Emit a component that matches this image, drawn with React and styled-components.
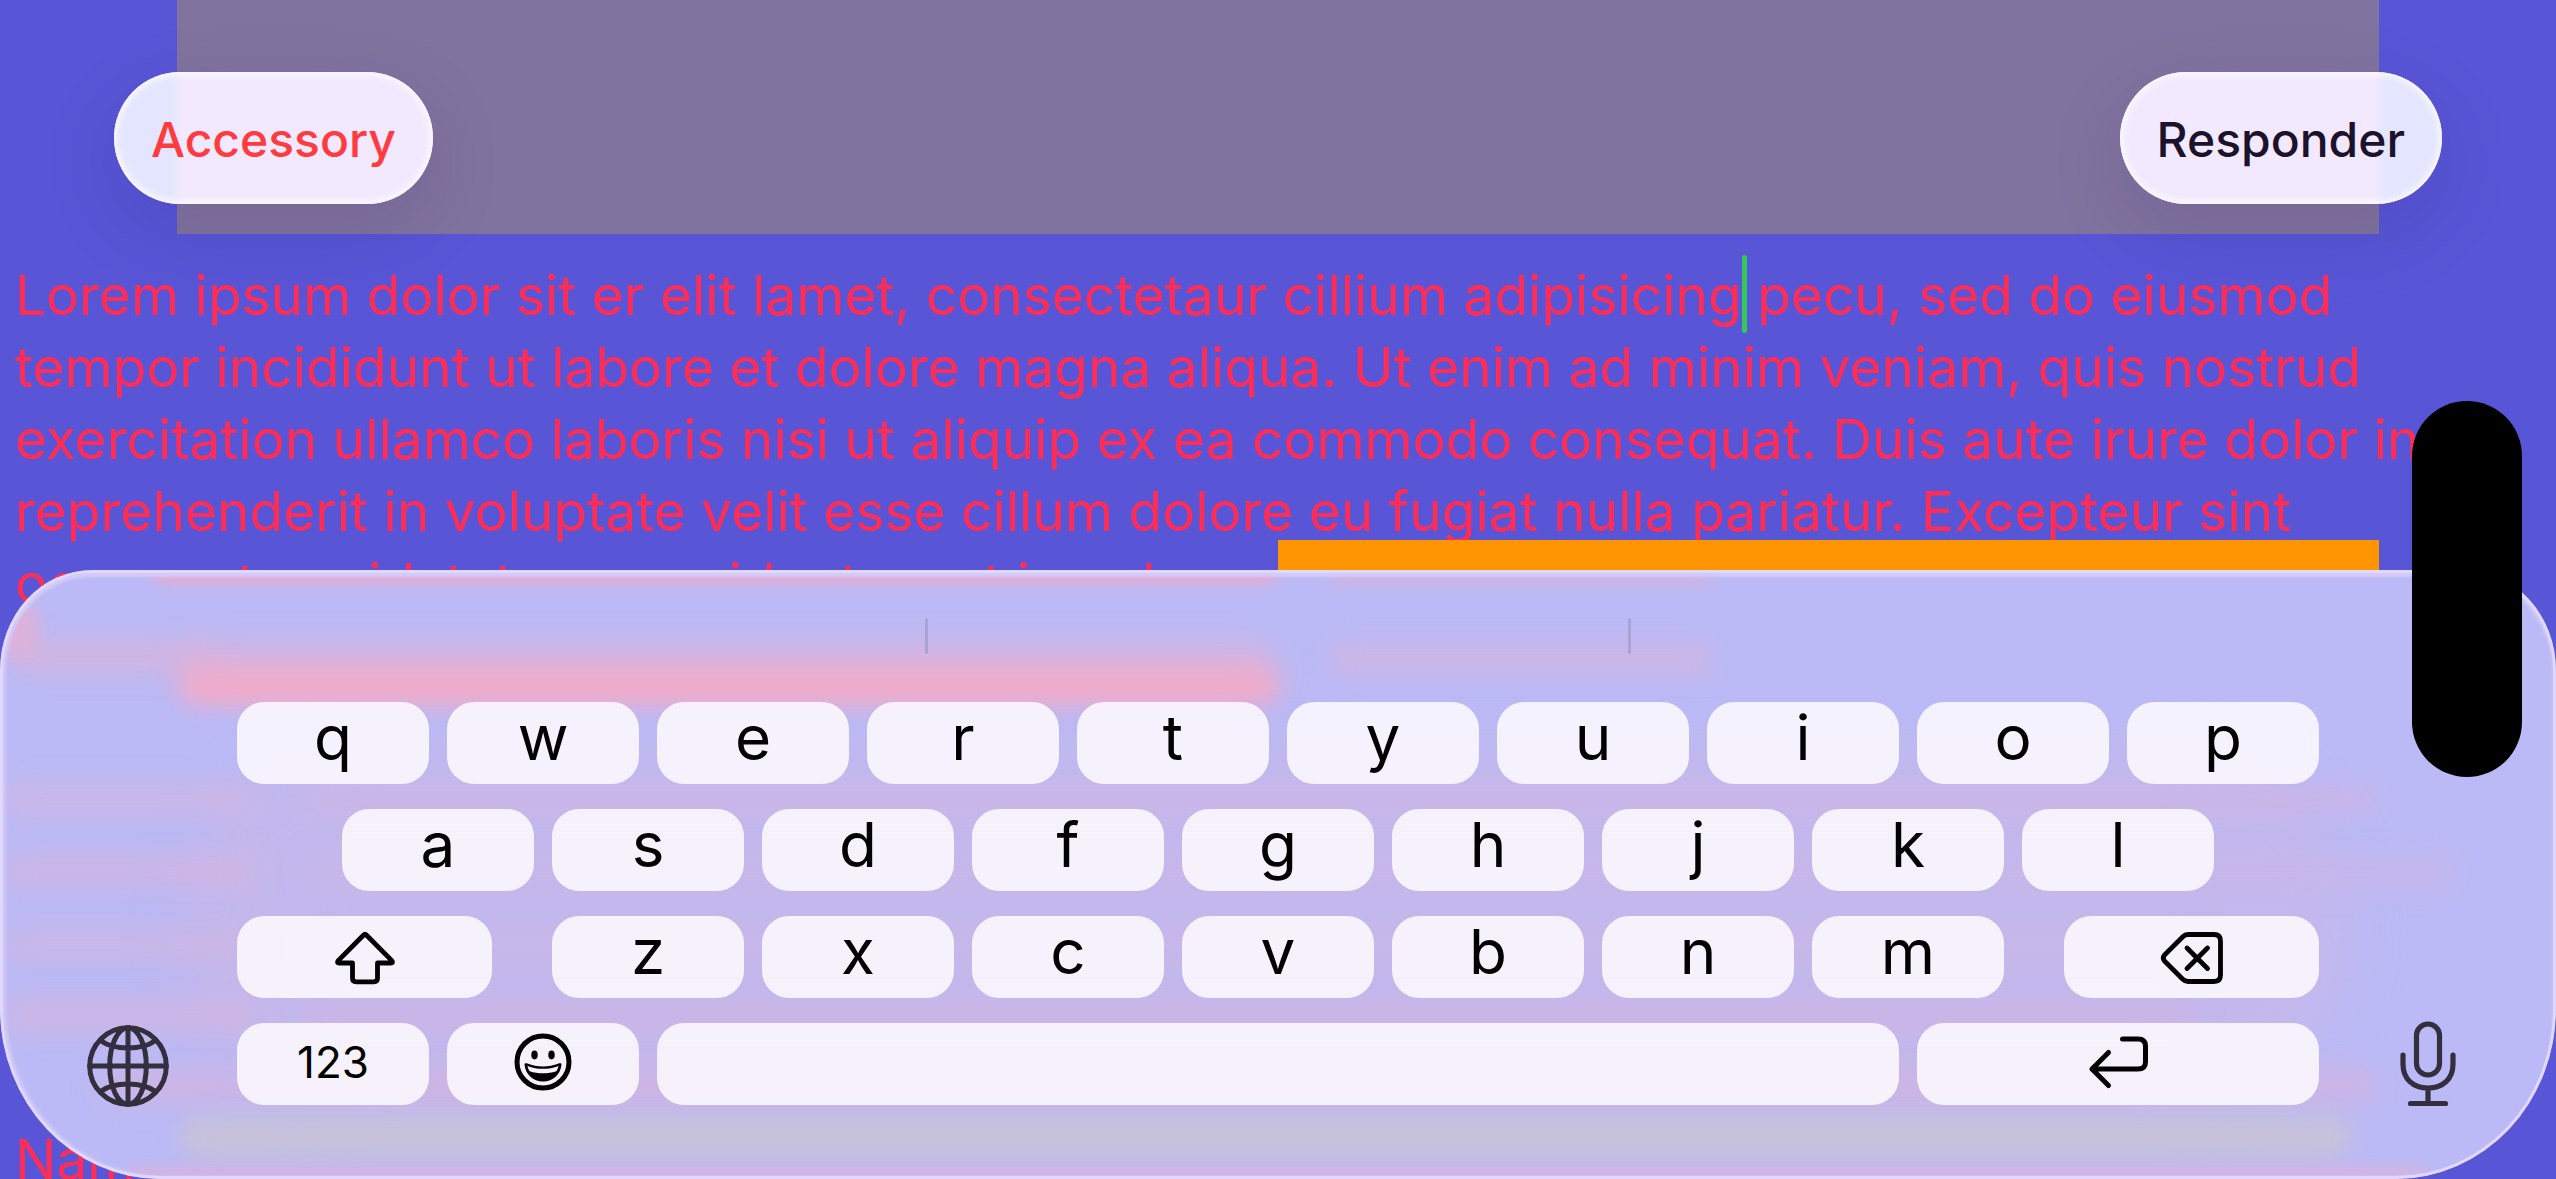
import React, { useLayoutEffect, useRef, useState } from "react";
import styled, { createGlobalStyle } from "styled-components";

const GlobalStyle = createGlobalStyle`
  *, *::before, *::after { box-sizing: border-box; }
  body {
    margin: 0;
    background: #5856d6;
    font-family: Inter, "Liberation Sans", sans-serif;
  }
  button, textarea { font-family: inherit; }
`;

const Screen = styled.main`
  position: relative;
  display: flex;
  flex-direction: column;
  height: 100vh;
  overflow: hidden;
  background: #5856d6;
`;

const Header = styled.header`
  display: flex;
  justify-content: space-between;
  padding: 72px 114px 30px;
  background: linear-gradient(#81739f, #81739f) center / calc(100% - 354px) 100% no-repeat;
`;

const Pill = styled.button`
  height: 132px;
  padding: 4px 37px 0;
  border: 0;
  border-radius: 66px;
  font-size: 48px;
  font-weight: 500;
  line-height: 60px;
  color: ${(p) => (p.$accent ? "#ff3b40" : "#1b122c")};
  background: linear-gradient(${(p) => (p.$edge === "left" ? "90deg" : "270deg")}, #e3e6fe 56px, #f2e9fe 68px);
  box-shadow: inset 0 0 6px 3px #fdf8ff, 0 24px 80px rgba(30, 0, 80, 0.12);
`;

const Editor = styled.section`
  position: relative;
  display: flex;
  flex: 1;
  min-height: 0;
`;

const TextArea = styled.textarea`
  flex: 1;
  padding: 25px 60px 0 15px;
  border: 0;
  outline: 0;
  resize: none;
  overflow: hidden;
  white-space: pre;
  background: transparent;
  color: #ff2d55;
  caret-color: transparent;
  font-size: 55px;
  line-height: 72px;
`;

const Caret = styled.span`
  position: absolute;
  top: 21px;
  width: 5px;
  height: 78px;
  border-radius: 3px;
  background: #34c759;
`;

const OrangeBlock = styled.div`
  position: absolute;
  top: 306px;
  left: 50%;
  right: 177px;
  height: 200px;
  background: #ff9500;
`;

const Island = styled.div`
  position: absolute;
  top: 401px;
  right: 34px;
  width: 110px;
  height: 376px;
  border-radius: 55px;
  background: #000;
`;

const Keyboard = styled.section`
  position: absolute;
  left: 0;
  right: 0;
  bottom: 0;
  overflow: hidden;
  border-radius: 92px 92px 160px 160px / 100px 100px 170px 170px;
  background: #bbbaf6;
`;

const Rim = styled.div`
  position: absolute;
  inset: 0;
  border-radius: inherit;
  border: 3px solid #e2d8fe;
  box-shadow: inset 0 4px 3px #d3cbfb, inset 3px 0 3px #cfcafb;
  pointer-events: none;
`;

const Glow = styled.div`
  position: absolute;
  left: ${(p) => p.$x}%;
  width: ${(p) => p.$w}%;
  top: ${(p) => p.$y}px;
  height: ${(p) => p.$h}px;
  border-radius: ${(p) => p.$h / 2}px;
  background: ${(p) => p.$c};
  filter: blur(${(p) => p.$b || 12}px);
`;

const Suggestions = styled.div`
  position: relative;
  display: flex;
  justify-content: space-evenly;
  align-items: center;
  height: 132px;
  padding: 0 224px;
`;

const Divider = styled.span`
  width: 3px;
  height: 36px;
  border-radius: 2px;
  background: #a9a3d6;
`;

const KeyboardBody = styled.div`
  position: relative;
  display: grid;
  grid-template-columns: minmax(0, 237fr) minmax(0, 2082fr) minmax(0, 237fr);
  align-items: end;
  padding-bottom: 72px;
`;

const SideButton = styled.button`
  display: flex;
  justify-content: ${(p) => (p.$right ? "flex-end" : "flex-start")};
  padding: ${(p) => (p.$right ? "0 87px 0 0" : "0 0 0 87px")};
  border: 0;
  background: none;
  color: #332f3e;
`;

const Rows = styled.div`
  display: flex;
  flex-direction: column;
  gap: 25px;
  padding-bottom: 2px;
`;

const Row = styled.div`
  display: flex;
  gap: 18px;
`;

const Spacer = styled.span`
  flex: ${(p) => p.$units} 1 0;
`;

const Key = styled.button`
  display: flex;
  justify-content: center;
  align-items: center;
  flex: ${(p) => p.$units || 192} 1 0;
  min-width: 0;
  height: 82px;
  padding: ${(p) => (p.$small ? "0 0 4px" : "0 0 10px")};
  border: 0;
  border-radius: 27px;
  background: rgba(255, 253, 255, 0.84);
  color: #000;
  font-size: ${(p) => (p.$small ? 44 : 62)}px;
  line-height: 72px;
`;

const IconKey = styled(Key)`
  padding: ${(p) => (p.$raised ? "0 0 4px" : "2px 0 0")};
`;

const Icon = styled.svg`
  display: block;
  flex: none;
  overflow: visible;
  fill: none;
  stroke: currentColor;
  stroke-linecap: round;
  stroke-linejoin: round;
`;

const ShiftIcon = () => (
  <Icon width="60" height="52" viewBox="0 0 60 52" strokeWidth="4.8">
    <path d="M28.4 3.2Q30 1.6 31.6 3.2L56.8 28.6Q58.8 31 55.6 31H42.5V46Q42.5 49.8 38.7 49.8H21.3Q17.5 49.8 17.5 46V31H4.4Q1.2 31 3.2 28.6Z" />
  </Icon>
);

const DeleteIcon = () => (
  <Icon width="62" height="52" viewBox="0 0 62 52" strokeWidth="4.8">
    <path d="M27 2.500H53Q59.500 2.500 59.500 9V43Q59.500 49.500 53 49.500H27Q24 49.500 21.800 47.300L3.500 29Q1 26 3.500 23L21.800 4.700Q24 2.500 27 2.500Z" />
    <path d="M26 16L46.500 36.500M46.500 16L26 36.500" />
  </Icon>
);

const ReturnIcon = () => (
  <Icon width="59" height="52" viewBox="0 0 59 52" strokeWidth="5">
    <path d="M33.500 3H49Q56.500 3 56.500 10V26Q56.500 33 49 33H3M19.500 16.500L3 33L19.500 49.500" />
  </Icon>
);

const SmileIcon = () => (
  <Icon width="58" height="58" viewBox="0 0 58 58" strokeWidth="5">
    <circle cx="29" cy="29" r="26" />
    <ellipse cx="20.500" cy="22" rx="3.200" ry="4.400" fill="currentColor" stroke="none" />
    <ellipse cx="37.500" cy="22" rx="3.200" ry="4.400" fill="currentColor" stroke="none" />
    <path d="M10.500 31.500C10.500 29.800 12.200 30 13.500 30.600C23 34.500 35 34.500 44.500 30.600C45.800 30 47.500 29.800 47.500 31.500C46.500 41.500 39 48.500 29 48.500S11.500 41.500 10.500 31.500Z" fill="currentColor" stroke="none" />
    <path d="M13.500 33C23 36.800 35 36.800 44.500 33C44 35.500 43.300 37 42.300 38.300C34 41 24 41 15.700 38.300C14.700 37 14 35.500 13.500 33Z" fill="#faf1ff" stroke="none" />
  </Icon>
);

const GlobeIcon = () => (
  <Icon width="82" height="82" viewBox="0 0 82 82" strokeWidth="5">
    <circle cx="41" cy="41" r="38.300" />
    <ellipse cx="41" cy="41" rx="18.300" ry="38.300" />
    <path d="M41 2.700V79.300M2.700 41H79.300M13.500 15.500C27 25.500 55 25.500 68.500 15.500M13.500 66.500C27 56.500 55 56.500 68.500 66.500" />
  </Icon>
);

const MicIcon = () => (
  <Icon width="82" height="86" viewBox="0 0 82 86" strokeWidth="5.2">
    <rect x="29.500" y="3" width="23" height="51" rx="11.500" />
    <path d="M16 34V43C16 58 26 67 41 67S66 58 66 43V34M41 67V82.500M23.500 82.500H58.500" />
  </Icon>
);

const CARET_PREFIX = "Lorem ipsum dolor sit er elit lamet, consectetaur cillium adipisicing";

const DOCUMENT = [
  CARET_PREFIX + " pecu, sed do eiusmod",
  "tempor incididunt ut labore et dolore magna aliqua. Ut enim ad minim veniam, quis nostrud",
  "exercitation ullamco laboris nisi ut aliquip ex ea commodo consequat. Duis aute irure dolor in",
  "reprehenderit in voluptate velit esse cillum dolore eu fugiat nulla pariatur. Excepteur sint",
  "occaecat cupidatat non proident, sunt in culpa qui officia deserunt mollit anim id est",
  "", "", "", "", "", "", "",
  "Nam liber te conscient to factor tum poen legum odioque civiuda.",
].join("\n");

const GLOWS = [
  { x: 7, y: 180, w: 85, h: 360, c: "#c3b8ed", b: 24 },
  { x: 6, y: -8, w: 44, h: 20, c: "#f0a8c8", b: 7 },
  { x: 52, y: 0, w: 15, h: 14, c: "#d2b3e0", b: 7 },
  { x: 0.5, y: 70, w: 8, h: 34, c: "#d0b5e2" },
  { x: 0, y: 30, w: 1.5, h: 60, c: "#dcb2d8", b: 8 },
  { x: 7, y: 76, w: 43, h: 48, c: "#d9b3dc", b: 16 },
  { x: 7, y: 98, w: 43, h: 36, c: "#f1abca", b: 11 },
  { x: 52, y: 74, w: 15, h: 30, c: "#cdb5e4" },
  { x: 0, y: 216, w: 10, h: 26, c: "#cfb5e2", b: 14 },
  { x: 12, y: 216, w: 81, h: 26, c: "#cbb5e7" },
  { x: 0, y: 288, w: 10, h: 26, c: "#d1b4e0", b: 14 },
  { x: 12, y: 290, w: 84, h: 26, c: "#c8b6e9", b: 14 },
  { x: 0, y: 362, w: 10, h: 26, c: "#cdb5e3", b: 14 },
  { x: 12, y: 362, w: 74, h: 26, c: "#c9b6e8", b: 14 },
  { x: 0, y: 430, w: 10, h: 30, c: "#d0b4e1", b: 14 },
  { x: 12, y: 434, w: 74, h: 26, c: "#cdb4e5" },
  { x: 4, y: 500, w: 89, h: 32, c: "#cfb4e2", b: 14 },
  { x: 7, y: 545, w: 85, h: 44, c: "#c6c1db", b: 10 },
  { x: 5, y: 596, w: 90, h: 16, c: "#d3b3e0", b: 6 },
];

const letters = (text) => text.split("").map((c) => <Key key={c}>{c}</Key>);

export default function App() {
  const areaRef = useRef(null);
  const [caretX, setCaretX] = useState(0);

  useLayoutEffect(() => {
    const style = getComputedStyle(areaRef.current);
    const ctx = document.createElement("canvas").getContext("2d");
    ctx.font = `${style.fontSize} ${style.fontFamily}`;
    setCaretX(parseFloat(style.paddingLeft) + ctx.measureText(CARET_PREFIX).width);
  }, []);

  return (
    <Screen>
      <GlobalStyle />
      <Header>
        <Pill $accent $edge="left">Accessory</Pill>
        <Pill $edge="right">Responder</Pill>
      </Header>
      <Editor>
        <TextArea ref={areaRef} aria-label="Document" defaultValue={DOCUMENT} spellCheck={false} />
        <Caret style={{ left: caretX }} />
        <OrangeBlock />
      </Editor>
      <Keyboard aria-label="Keyboard">
        {GLOWS.map((g, i) => (
          <Glow key={i} $x={g.x} $y={g.y} $w={g.w} $h={g.h} $c={g.c} $b={g.b} />
        ))}
        <Rim />
        <Suggestions>
          <Divider />
          <Divider />
        </Suggestions>
        <KeyboardBody>
          <SideButton aria-label="Next keyboard"><GlobeIcon /></SideButton>
          <Rows>
            <Row>{letters("qwertyuiop")}</Row>
            <Row>
              <Spacer $units={87} />
              {letters("asdfghjkl")}
              <Spacer $units={87} />
            </Row>
            <Row>
              <IconKey $units={255} aria-label="Shift"><ShiftIcon /></IconKey>
              <Spacer $units={24} />
              {letters("zxcvbnm")}
              <Spacer $units={24} />
              <IconKey $units={255} aria-label="Delete"><DeleteIcon /></IconKey>
            </Row>
            <Row>
              <Key $small>123</Key>
              <IconKey $raised aria-label="Emoji"><SmileIcon /></IconKey>
              <Key $units={1242} aria-label="Space" />
              <IconKey $raised $units={402} aria-label="Return"><ReturnIcon /></IconKey>
            </Row>
          </Rows>
          <SideButton $right aria-label="Dictate"><MicIcon /></SideButton>
        </KeyboardBody>
      </Keyboard>
      <Island />
    </Screen>
  );
}
